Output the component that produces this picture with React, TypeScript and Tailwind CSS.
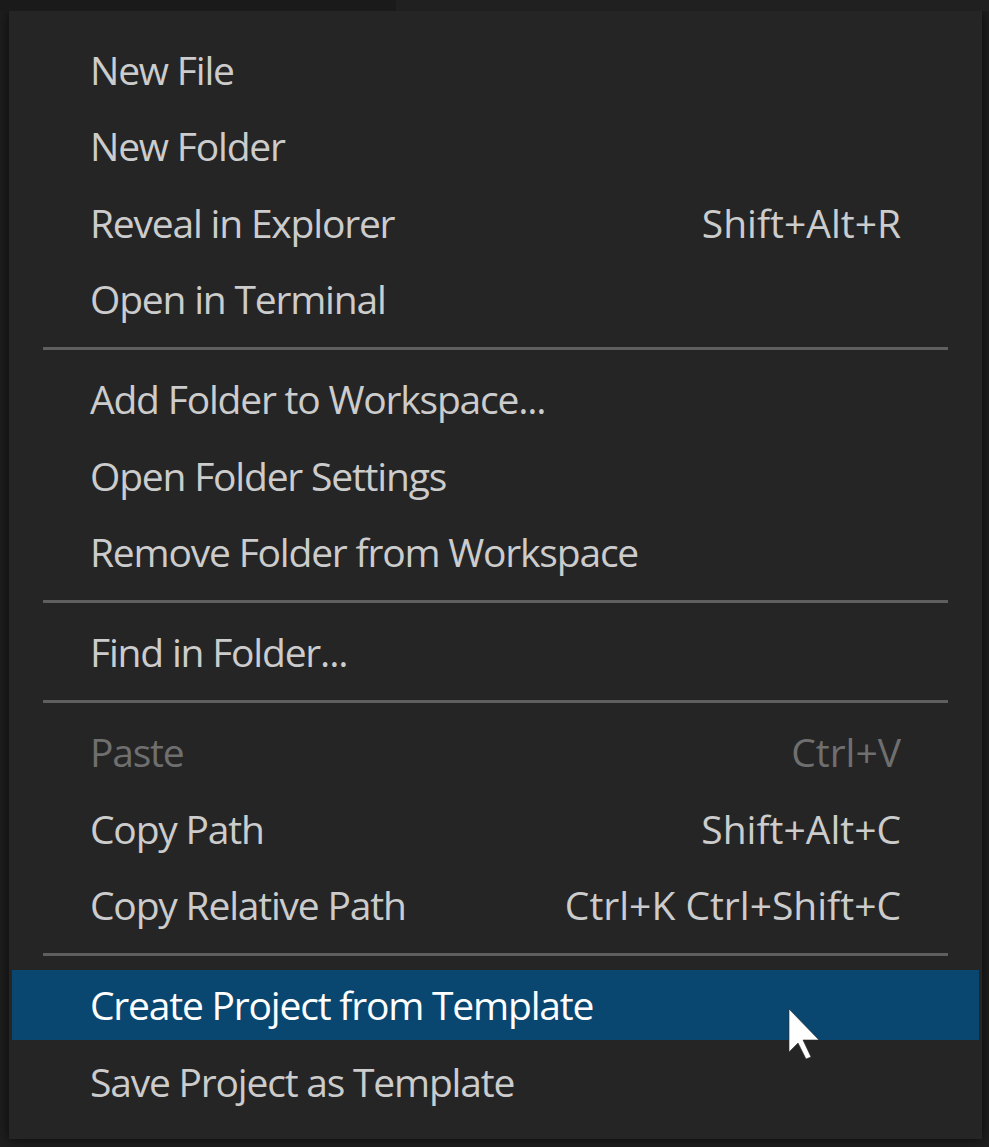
import React from "react";

type Item = { label: string; keys?: string; disabled?: boolean; active?: boolean };

const groups: Item[][] = [
  [
    { label: "New File" },
    { label: "New Folder" },
    { label: "Reveal in Explorer", keys: "Shift+Alt+R" },
    { label: "Open in Terminal" },
  ],
  [
    { label: "Add Folder to Workspace..." },
    { label: "Open Folder Settings" },
    { label: "Remove Folder from Workspace" },
  ],
  [{ label: "Find in Folder..." }],
  [
    { label: "Paste", keys: "Ctrl+V", disabled: true },
    { label: "Copy Path", keys: "Shift+Alt+C" },
    { label: "Copy Relative Path", keys: "Ctrl+K Ctrl+Shift+C" },
  ],
  [
    { label: "Create Project from Template", active: true },
    { label: "Save Project as Template" },
  ],
];

function Cursor() {
  return (
    <svg
      className="absolute left-[776px] top-[38px]"
      width="34"
      height="54"
      viewBox="0 0 34 54"
    >
      <path
        d="M1 1 L1 44 L10 35 L18 51 L23 49 L15 32 L31 32 Z"
        fill="#ffffff"
        stroke="#2a2a2a"
        strokeWidth="0.6"
      />
    </svg>
  );
}

function Row({ item }: { item: Item }) {
  const color = item.active
    ? "text-white"
    : item.disabled
    ? "text-[#6f6f6f]"
    : "text-[#cccccc]";
  return (
    <div className="h-[76.5px] px-[3px] flex items-center">
      <div
        className={`relative h-[70px] w-full flex items-center justify-between pl-[78px] pr-[78px] ${color} ${
          item.active ? "bg-[#094771]" : ""
        }`}
      >
        <span className="tracking-[-1.2px]">{item.label}</span>
        {item.keys && <span className="tracking-normal">{item.keys}</span>}
        {item.active && <Cursor />}
      </div>
    </div>
  );
}

export default function App() {
  return (
    <div className="w-[989px] h-[1147px] bg-[#1e1e1e] overflow-hidden">
      {/* strip of the window behind the menu */}
      <div className="h-[11px] flex">
        <div className="w-[396px] bg-[#1a1a1a]" />
        <div className="flex-1 bg-[#202020]" />
      </div>
      <div
        className="ml-[9px] w-[973px] h-[1128px] bg-[#252526] pt-[20px] pb-[16px] shadow-[0_0_12px_rgba(0,0,0,0.7)] text-[39px] leading-none"
        style={{ fontFamily: '"Open Sans", "Noto Sans", sans-serif' }}
      >
        {groups.map((group, gi) => (
          <div key={gi}>
            {gi > 0 && <div className="mx-[34px] h-[3px] bg-[#5f5f5f] mt-[9.5px] mb-[11px]" />}
            {group.map((item) => (
              <Row key={item.label} item={item} />
            ))}
          </div>
        ))}
      </div>
    </div>
  );
}
